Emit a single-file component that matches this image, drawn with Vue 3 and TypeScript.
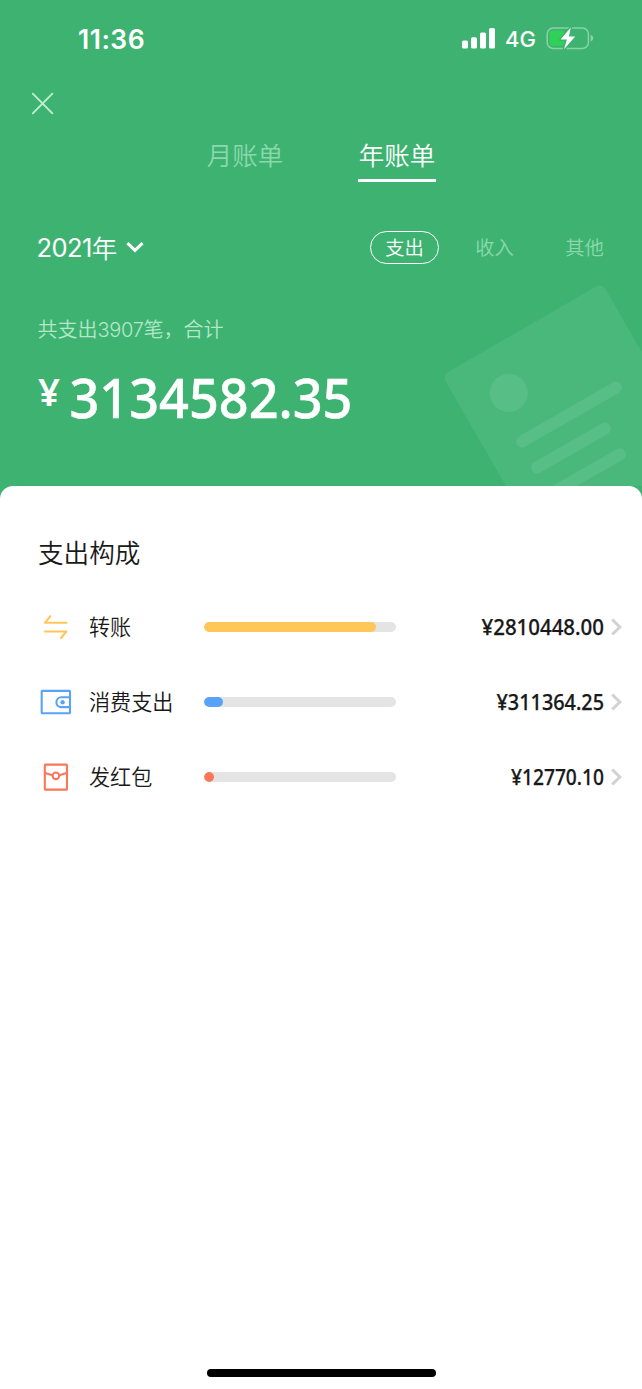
<script setup lang="ts">
interface Category {
  key: 'transfer' | 'spend' | 'packet'
  label: string
  amount: string
  width: number
  percent: number
}

const categories: Category[] = [
  { key: 'transfer', label: '转账', amount: '¥2810448.00', width: 122.5, percent: 89.7 },
  { key: 'spend', label: '消费支出', amount: '¥311364.25', width: 107.5, percent: 9.9 },
  { key: 'packet', label: '发红包', amount: '¥12770.10', width: 93, percent: 5.2 },
]
</script>

<template>
  <main class="screen">
    <header class="hero">
      <svg class="receipt" viewBox="430 270 212 216" width="212" height="216">
        <rect x="0" y="0" width="184.5" height="260" rx="7" transform="translate(442.2 375.5) rotate(-30)" fill="#4bb87b" />
        <circle cx="508.7" cy="393" r="19" fill="#57be85" />
        <g stroke="#57be85" stroke-width="12" stroke-linecap="round">
          <path d="M522 441.5L616 387.5" />
          <path d="M537 467.5L605 428.5" />
          <path d="M550 494L620 454.5" />
        </g>
      </svg>

      <div class="status">
        <span class="time">11:36</span>
        <div class="indicators">
          <svg width="33" height="22" viewBox="0 0 33 22" fill="#fff">
            <rect x="0" y="12.5" width="6" height="8" rx="1.6" />
            <rect x="9" y="9.2" width="6" height="11.3" rx="1.6" />
            <rect x="18" y="4.5" width="6" height="16" rx="1.6" />
            <rect x="27" y="0" width="6" height="20.5" rx="1.6" />
          </svg>
          <span class="network">4G</span>
          <svg class="battery" width="48" height="24" viewBox="0 0 48 24">
            <rect x="1.2" y="1" width="41.2" height="20.4" rx="6" fill="none" stroke="#8bd1aa" stroke-width="1.5" />
            <path d="M44.6 7.7Q47.2 8.5 47.2 11.2Q47.2 13.8 44.6 14.7Z" fill="#8bd1aa" />
            <rect x="3.5" y="3.5" width="15" height="15.5" rx="3.3" fill="#31d158" />
            <path d="M24.7 0.5L14.6 12.6H20.9L18 22.3L29.2 9.4H23Z" fill="#fff" stroke="#3eb371" stroke-width="2.8" paint-order="stroke" stroke-linejoin="round" />
          </svg>
        </div>
      </div>

      <button class="close" aria-label="关闭">
        <svg width="24" height="24" viewBox="0 0 24 24" stroke="#bdf0d1" stroke-width="1.9" stroke-linecap="round">
          <path d="M1.8 2.7L21.4 22.3M21.4 2.7L1.8 22.3" />
        </svg>
      </button>

      <nav class="tabs">
        <span class="tab">月账单</span>
        <span class="tab active">年账单</span>
      </nav>

      <div class="filters">
        <div class="year">
          <span>2021</span><span class="unit">年</span>
          <svg width="18" height="12" viewBox="0 0 18 12" fill="none" stroke="#fff" stroke-width="3">
            <path d="M1.4 2.2L9 9.4L16.6 2.2" />
          </svg>
        </div>
        <div class="kinds">
          <span class="kind selected">支出</span>
          <span class="kind">收入</span>
          <span class="kind">其他</span>
        </div>
      </div>

      <p class="summary">共支出<span class="count">3907</span>笔，合计</p>
      <svg class="total" width="340" height="84" viewBox="0 0 340 84">
        <text class="yen" x="0" y="49" textLength="22" lengthAdjust="spacingAndGlyphs">¥</text>
        <text class="sum" x="31.5" y="60.5" textLength="283" lengthAdjust="spacingAndGlyphs">3134582.35</text>
      </svg>
    </header>

    <section class="sheet">
      <h2 class="title">支出构成</h2>
      <div v-for="c in categories" :key="c.key" class="row">
        <svg class="icon" width="34" height="34" viewBox="0 0 34 34" fill="none" stroke-width="2.1">
          <g v-if="c.key === 'transfer'" stroke="#ffc658" stroke-linecap="round" stroke-linejoin="round">
            <path d="M12.4 6.2L7 12.8H28.5" />
            <path d="M7 21.5H28.3L23 28" />
          </g>
          <g v-else-if="c.key === 'spend'" stroke="#58a2fa" stroke-linejoin="round">
            <rect x="3.7" y="5.9" width="28.3" height="22.4" rx="0.6" />
            <path d="M32 12.3H23.3A4.9 4.9 0 0 0 23.3 22.1H32" />
            <circle cx="24.6" cy="17.2" r="2.2" fill="#58a2fa" stroke="none" />
          </g>
          <g v-else stroke="#fa7759" stroke-linejoin="round">
            <rect x="6.8" y="4.6" width="22.2" height="25" rx="0.6" />
            <path d="M7 12.9L14.5 15.3M28.8 12.9L21.3 15.3" />
            <circle cx="17.9" cy="15.8" r="3.3" />
          </g>
        </svg>
        <span class="label">{{ c.label }}</span>
        <div class="track">
          <div class="fill" :class="c.key" :style="{ width: c.percent + '%' }"></div>
        </div>
        <svg class="amount" width="150" height="40" viewBox="0 0 150 40">
          <text :x="145 - c.width" y="28" :textLength="c.width" lengthAdjust="spacingAndGlyphs">{{ c.amount }}</text>
        </svg>
        <svg class="chevron" width="11" height="18" viewBox="0 0 11 18" fill="none" stroke="#d2d2d2" stroke-width="3.1">
          <path d="M1.2 1.5L8.8 9L1.2 16.5" />
        </svg>
      </div>
      <div class="home"></div>
    </section>
  </main>
</template>

<style>
body {
  margin: 0;
  background: #3eb371;
}
</style>

<style scoped>
.screen {
  width: 642px;
  height: 1389px;
  overflow: hidden;
  display: flex;
  flex-direction: column;
  background: #3eb371;
  font-family: Inter, "Noto Sans CJK SC", sans-serif;
  color: #fff;
}
.hero {
  position: relative;
  height: 486px;
  flex: none;
}
.receipt {
  position: absolute;
  right: 0;
  bottom: 0;
}
.status {
  display: flex;
  justify-content: space-between;
  align-items: center;
  height: 78px;
  padding: 0 48px 0 78px;
}
.time {
  font-size: 26.5px;
  font-weight: 600;
  letter-spacing: 0.5px;
}
.indicators {
  display: flex;
  align-items: center;
}
.network {
  font-size: 22px;
  font-weight: 500;
  line-height: 24px;
  width: 30px;
  margin: 0 11px 1px 10px;
}
.close {
  display: flex;
  width: 24px;
  height: 24px;
  margin: 13px 0 0 31px;
  padding: 0;
  border: 0;
  background: none;
}
.tabs {
  display: flex;
  gap: 74px;
  margin: 21px 0 0 206px;
}
.tab {
  width: 78px;
  height: 43px;
  font-family: "Noto Sans CJK SC", sans-serif;
  font-size: 25.5px;
  font-weight: 350;
  line-height: 35px;
  text-align: center;
  color: #8bd8ad;
  border-bottom: 3px solid transparent;
}
.tab.active {
  color: #fff;
  border-color: #fff;
}
.filters {
  display: flex;
  justify-content: space-between;
  align-items: center;
  height: 34px;
  margin-top: 48px;
  padding: 0 23px 0 36.5px;
}
.year {
  display: flex;
  align-items: center;
  font-size: 25.5px;
  letter-spacing: -0.6px;
}
.unit {
  font-family: "Noto Sans CJK SC", sans-serif;
  line-height: 34px;
  font-weight: 350;
  margin-right: 9px;
}
.kinds {
  display: flex;
  gap: 21px;
}
.kind {
  box-sizing: border-box;
  width: 69px;
  height: 33px;
  border: 1.5px solid transparent;
  border-radius: 17px;
  font-family: "Noto Sans CJK SC", sans-serif;
  font-size: 19.3px;
  font-weight: 350;
  line-height: 31px;
  text-align: center;
  color: #8bd8ad;
}
.kind.selected {
  color: #fff;
  border-color: #fff;
}
.summary {
  margin: 50px 0 0 37.5px;
  font-family: "Noto Sans CJK SC", sans-serif;
  font-size: 20px;
  font-weight: 350;
  line-height: 30px;
  color: #b5e7ca;
}
.count {
  font-family: Inter, sans-serif;
  letter-spacing: -0.3px;
}
.total {
  display: block;
  margin: 12px 0 0 38px;
  fill: #fff;
  font-family: "Noto Sans", sans-serif;
  font-weight: 500;
}
.sum {
  font-size: 53.5px;
  stroke: #fff;
  stroke-width: 0.5;
}
.yen {
  font-size: 38px;
  font-weight: 600;
}
.sheet {
  box-sizing: border-box;
  flex: 1;
  display: flex;
  flex-direction: column;
  position: relative;
  padding-top: 47px;
  background: #fff;
  border-radius: 13px 13px 0 0;
  color: #191919;
}
.title {
  margin: 0 0 18px 38px;
  font-family: "Noto Sans CJK SC", sans-serif;
  font-size: 25.6px;
  font-weight: 350;
  line-height: 38px;
}
.row {
  display: flex;
  align-items: center;
  height: 75px;
  padding: 0 20px 0 38px;
}
.icon {
  flex: none;
}
.label {
  width: 98px;
  margin: -1px 17px 0;
  font-family: "Noto Sans CJK SC", sans-serif;
  font-size: 21.1px;
  font-weight: 350;
  line-height: 32px;
  white-space: nowrap;
}
.track {
  width: 192px;
  height: 10px;
  border-radius: 5px;
  background: #e4e4e4;
  overflow: hidden;
}
.fill {
  height: 10px;
  border-radius: 5px;
}
.fill.transfer {
  background: #ffc658;
}
.fill.spend {
  background: #58a2fa;
}
.fill.packet {
  background: #fa7759;
}
.amount {
  margin-left: auto;
  overflow: visible;
  fill: #191919;
  stroke: #191919;
  stroke-width: 0.25;
  font-family: "Noto Sans", sans-serif;
  font-size: 21.5px;
  font-weight: 500;
}
.chevron {
  margin-left: 2px;
}
.home {
  width: 229px;
  height: 8px;
  margin: auto auto 12px;
  border-radius: 4px;
  background: #000;
}
</style>
